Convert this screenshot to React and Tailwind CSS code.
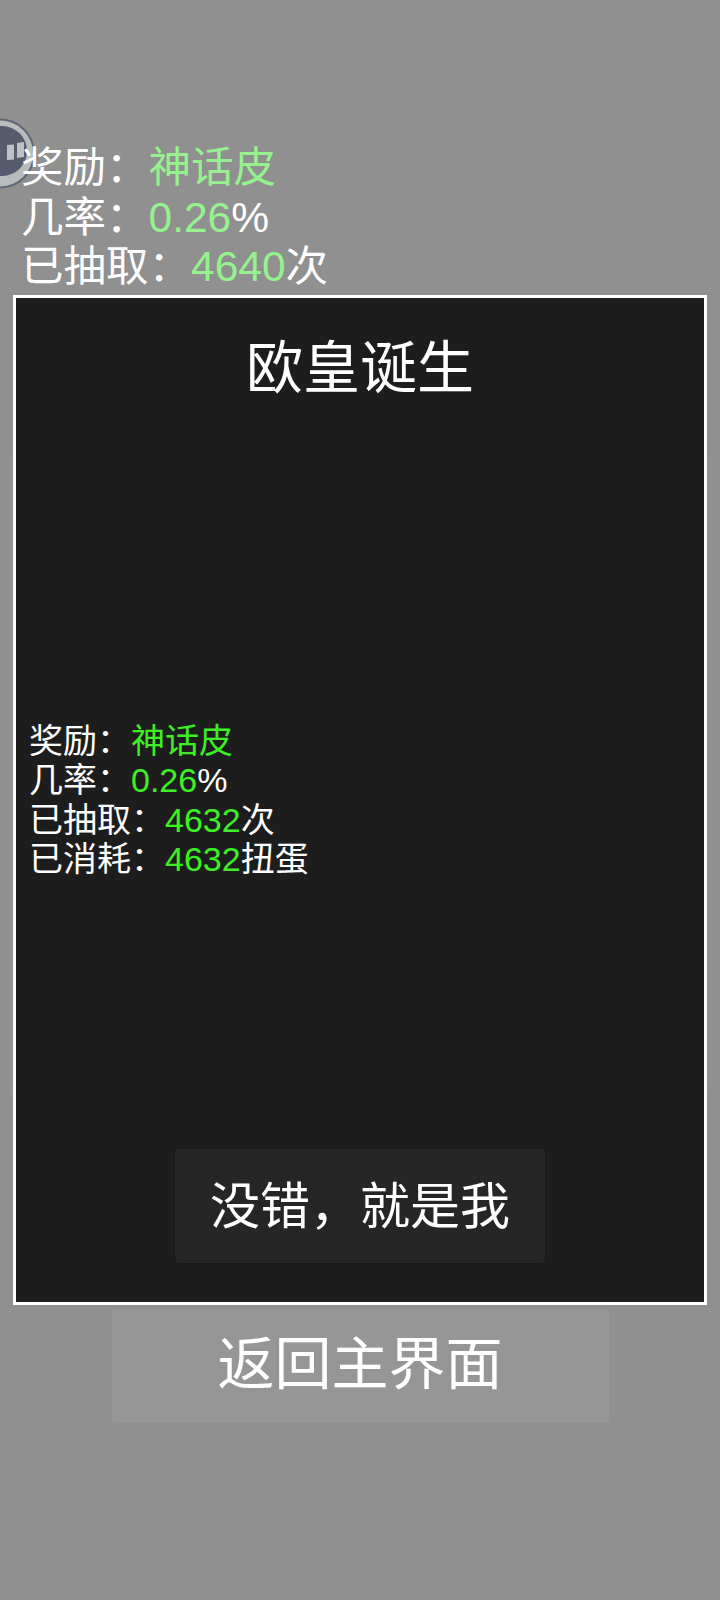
const FONT = "font-['Liberation_Sans','Noto_Sans_CJK_SC',sans-serif]";

function Ball() {
  return (
    <svg className="absolute left-0 top-[118px]" width="36" height="72" viewBox="0 0 36 72">
      <circle cx="0" cy="35.5" r="34" fill="#b9bcbc" stroke="#5f6675" strokeWidth="2" />
      <circle cx="2" cy="33" r="25" fill="#565c6e" />
      <path d="M7 27l7-.5v15l-7 .5z" fill="#bfc2c4" />
      <path d="M17 25l7-1v15l-7 1z" fill="#bfc2c4" />
    </svg>
  );
}

function Stats({ className, green, count }) {
  const G = ({ children }) => <span className={green}>{children}</span>;
  return (
    <div className={className}>
      <div>奖励：<G>神话皮</G></div>
      <div>几率：<G>0.26</G>%</div>
      <div>已抽取：<G>{count}</G>次</div>
      <div>已消耗：<G>{count}</G>扭蛋</div>
    </div>
  );
}

export default function App() {
  return (
    <div className={`relative w-[720px] h-[1600px] overflow-hidden bg-[#909090] text-white flex flex-col ${FONT}`}>
      <Ball />
      <Stats
        className="relative ml-[21px] mt-[143px] text-[42.5px] leading-[49.5px]"
        green="text-[#96f28e]"
        count="4640"
      />
      <div className="mt-[114px] ml-[9px] h-[640px] w-[700px] bg-[#949494]" />
      <div className="mt-[214px] mx-auto w-[497px] h-[114px] rounded-[4px] bg-[#969696] flex items-center justify-center pb-[4px] text-[57px] leading-none">
        返回主界面
      </div>
      <div className="absolute left-[13px] top-[295px] w-[694px] h-[1010px] border-[3px] border-white bg-[#1d1d1d] flex flex-col">
        <div className="mt-[37px] text-center text-[57px] leading-[66px]">欧皇诞生</div>
        <Stats
          className="ml-[13px] mt-[321px] text-[34px] leading-[39.3px]"
          green="text-[#3df023]"
          count="4632"
        />
        <div className="mt-auto mb-[38px] mx-auto w-[372px] h-[116px] rounded-[4px] bg-[#262626] border border-[#181818] flex items-center justify-center pt-[2px] text-[50px] leading-none">
          没错，就是我
        </div>
      </div>
    </div>
  );
}
